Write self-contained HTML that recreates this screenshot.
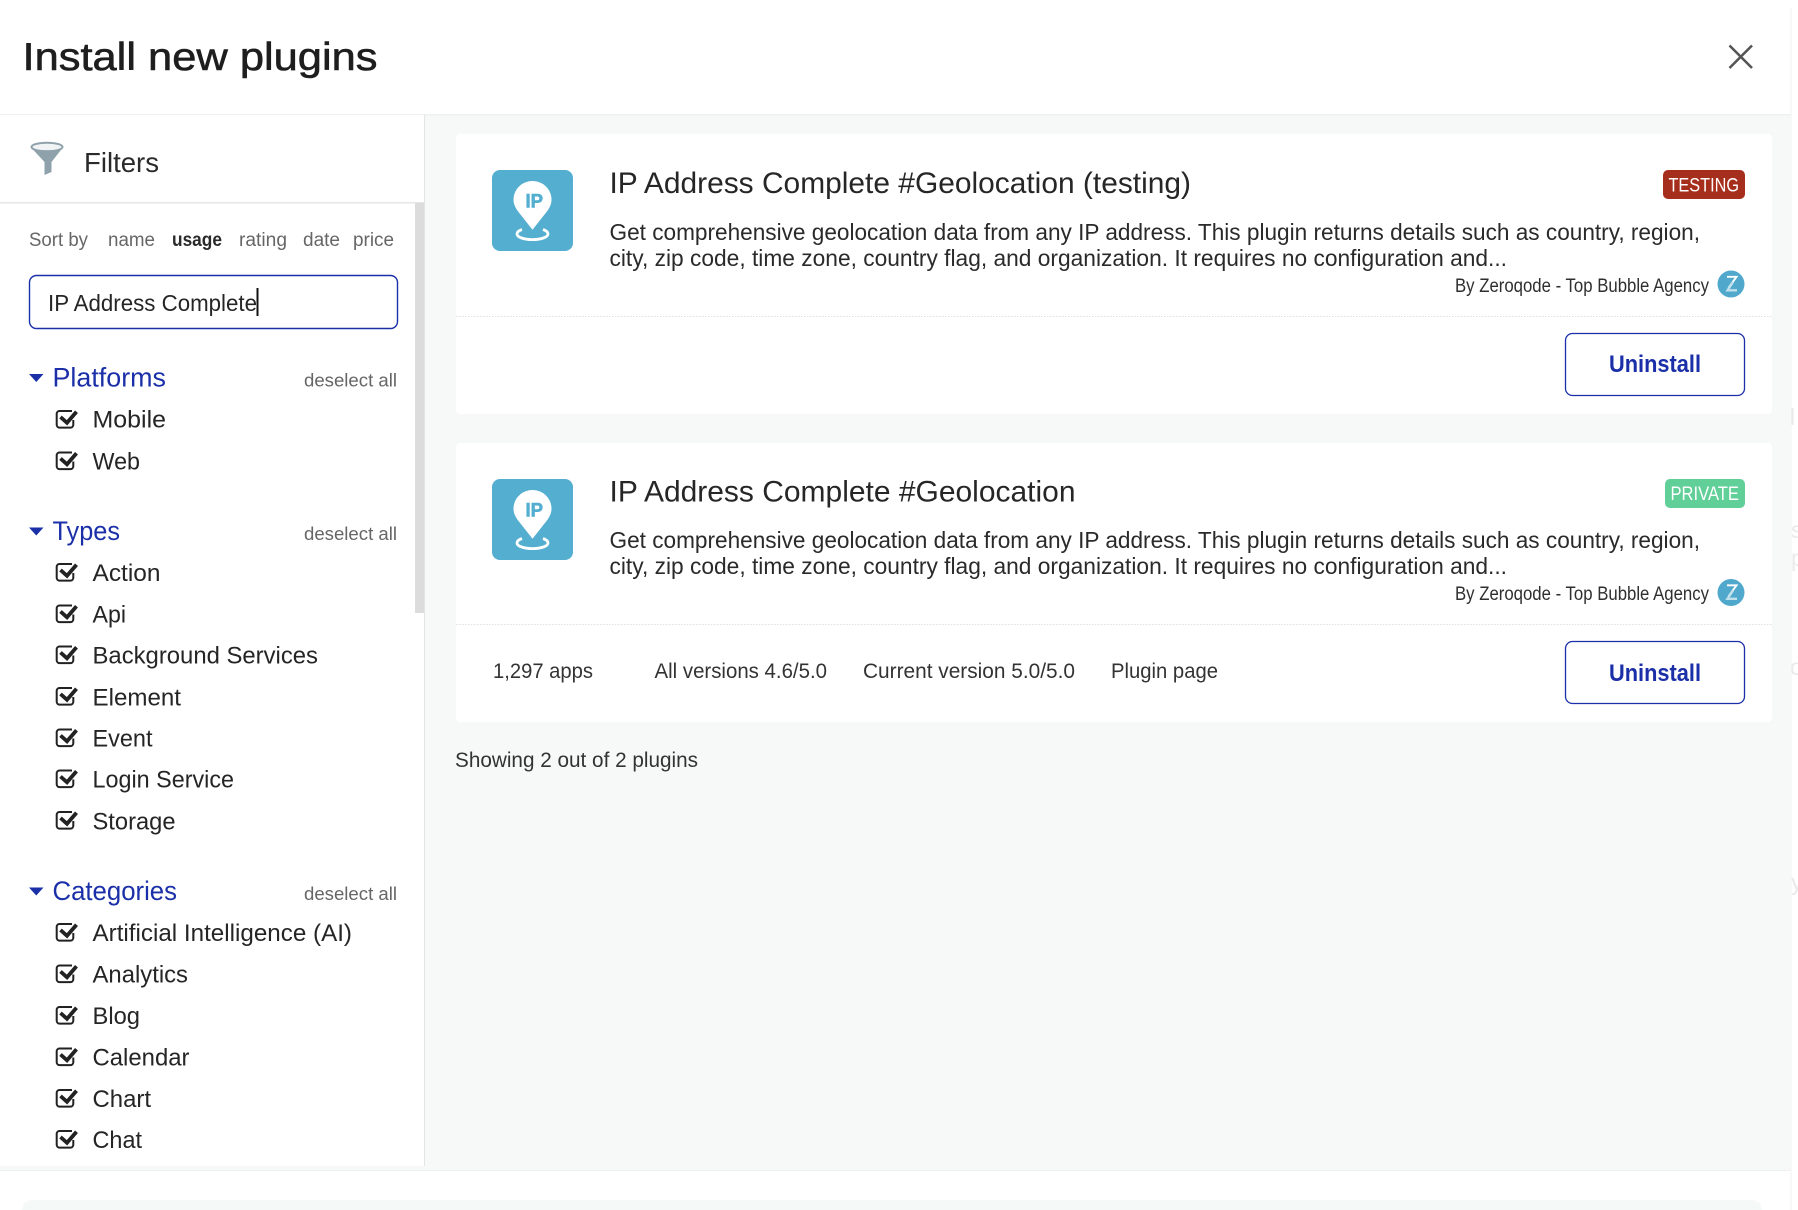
<!DOCTYPE html>
<html lang="en"><head><meta charset="utf-8"><title>Install new plugins</title>
<style>
html,body{margin:0;padding:0;background:#fff;width:1798px;height:1210px;overflow:hidden}
svg{display:block;font-family:"Liberation Sans",Arial,sans-serif}
.it{font-size:24.5px;fill:#252525}
.hd{font-size:27px;fill:#1a2fa8}
.ds{font-size:18.5px;fill:#666}
.so{font-size:19px;fill:#666}
.de{font-size:23px;fill:#2a2a2a}
.by{font-size:19px;fill:#2f2f2f}
.st{font-size:21px;fill:#333}
</style></head><body>
<svg xmlns="http://www.w3.org/2000/svg" width="1798" height="1210" viewBox="0 0 1798 1210">
<defs>
<g id="cb" fill="none" stroke="#222">
<path d="M72 411H59.500a2.800 2.800 0 0 0-2.800 2.800v11a2.800 2.800 0 0 0 2.800 2.800h11a2.800 2.800 0 0 0 2.800-2.800V420" stroke-width="2"/>
<path d="M60.500 417l6.500 5.800 9.500-11" stroke-width="3.800"/>
</g>
<g id="tri"><path d="M29 374h14.500l-7.250 8z" fill="#1a2fa8"/></g>
<g id="ico">
<rect x="492" y="170" width="81" height="81" rx="8" fill="#53aecf"/>
<path d="M532.500 181c-10.500 0-19 8.300-19 18.800 0 4 1.700 7.500 4 11l15 19 15-19c2.300-3.500 4-7 4-11 0-10.500-8.500-18.800-19-18.800z" fill="#fff"/>
<path d="M522 229.500c-3 1-5 2.600-5 4.500 0 3.200 7 5.600 15.500 5.600s15.500-2.400 15.500-5.600c0-1.900-2-3.500-5-4.500" fill="none" stroke="#fff" stroke-width="2.800"/>
<text x="525.500" y="207.500" font-size="19" font-weight="700" fill="#53aecf" stroke="#53aecf" stroke-width=".6" textLength="17.500" lengthAdjust="spacingAndGlyphs">IP</text>
</g>
<g id="av">
<circle cx="1731" cy="284" r="13.500" fill="#50a9cc"/>
<path d="M1727 276.800h9.500l-8 11" fill="none" stroke="#fff" stroke-width="1.900"/>
<path d="M1733 282l-5.500 8.300h9.500" fill="none" stroke="#bfe0ec" stroke-width="2.400"/>
</g>
</defs>

<rect width="1798" height="1210" fill="#fff"/>
<g font-size="23" fill="#eaeaea">
<text x="1790" y="425">l</text><text x="1791" y="538">s</text><text x="1791" y="566">p</text><text x="1790" y="675">ol</text><text x="1791" y="890">y</text>
</g>
<!-- modal -->
<rect x="0" y="0" width="1791" height="1210" fill="#fff"/>
<path d="M1791 8V1210" stroke="#f1f2f2" stroke-width="1" fill="none"/>
<rect x="0" y="115" width="1791" height="1056" fill="#f7f9f9"/>
<rect x="0" y="114" width="1791" height="1.500" fill="#eff0f0"/>
<rect x="0" y="1170" width="1791" height="1" fill="#eff1f1"/>
<text x="22.500" y="70" font-size="39" fill="#1e1e1e" stroke="#1e1e1e" stroke-width=".6" textLength="355" lengthAdjust="spacingAndGlyphs">Install new plugins</text>
<path d="M1729.500 45.500l22.500 22.500M1752 45.500l-22.500 22.500" stroke="#555" stroke-width="2.600" fill="none"/>

<!-- left panel -->
<rect x="0" y="115" width="424" height="1051" fill="#fff"/>
<rect x="424" y="115" width="1" height="1051" fill="#e3e5e5"/>
<rect x="0" y="202" width="424" height="1.500" fill="#e6e6e6"/>
<rect x="415" y="203" width="9" height="410" fill="#dcdcdc"/>
<ellipse cx="47" cy="147" rx="15.500" ry="4.300" fill="#f1f4f5" stroke="#8fa2ab" stroke-width="2"/>
<path d="M31.500 148c3 3 28 3 31 0l-11 14v10l-7 3v-13z" fill="#8fa2ab"/>
<text x="84" y="172" font-size="28" fill="#2a2a2a" textLength="75" lengthAdjust="spacingAndGlyphs">Filters</text>
<text class="so" x="29" y="246" textLength="59" lengthAdjust="spacingAndGlyphs">Sort by</text>
<text class="so" x="108" y="246" textLength="47" lengthAdjust="spacingAndGlyphs">name</text>
<text class="so" x="172" y="246" font-weight="700" style="fill:#2a2a2a" textLength="50" lengthAdjust="spacingAndGlyphs">usage</text>
<text class="so" x="239" y="246" textLength="48" lengthAdjust="spacingAndGlyphs">rating</text>
<text class="so" x="303" y="246" textLength="37" lengthAdjust="spacingAndGlyphs">date</text>
<text class="so" x="353" y="246" textLength="41" lengthAdjust="spacingAndGlyphs">price</text>
<rect x="29.500" y="275.500" width="368" height="53" rx="7" fill="#fff" stroke="#1a2fa8" stroke-width="1.400"/>
<text x="48" y="311" font-size="23" fill="#252525" textLength="209" lengthAdjust="spacingAndGlyphs">IP Address Complete</text>
<rect x="256.500" y="288" width="2" height="28" fill="#111"/>

<use href="#tri"/>
<text class="hd" x="52.500" y="386.500" textLength="113.500" lengthAdjust="spacingAndGlyphs">Platforms</text>
<text class="ds" x="304" y="386.500" textLength="93" lengthAdjust="spacingAndGlyphs">deselect all</text>
<use href="#cb"/><text class="it" x="92.500" y="427.500" textLength="73.500" lengthAdjust="spacingAndGlyphs">Mobile</text>
<use href="#cb" y="41.500"/><text class="it" x="92.500" y="469.500" textLength="47.500" lengthAdjust="spacingAndGlyphs">Web</text>

<use href="#tri" y="153.500"/>
<text class="hd" x="52.500" y="540" textLength="67.500" lengthAdjust="spacingAndGlyphs">Types</text>
<text class="ds" x="304" y="540" textLength="93" lengthAdjust="spacingAndGlyphs">deselect all</text>
<use href="#cb" y="153"/><text class="it" x="92.500" y="581" textLength="68" lengthAdjust="spacingAndGlyphs">Action</text>
<use href="#cb" y="194.500"/><text class="it" x="92.500" y="622.500" textLength="33.500" lengthAdjust="spacingAndGlyphs">Api</text>
<use href="#cb" y="235.500"/><text class="it" x="92.500" y="663.500" textLength="225.500" lengthAdjust="spacingAndGlyphs">Background Services</text>
<use href="#cb" y="277"/><text class="it" x="92.500" y="705.500" textLength="88.500" lengthAdjust="spacingAndGlyphs">Element</text>
<use href="#cb" y="318.500"/><text class="it" x="92.500" y="746.500" textLength="60" lengthAdjust="spacingAndGlyphs">Event</text>
<use href="#cb" y="359.500"/><text class="it" x="92.500" y="787.500" textLength="141.500" lengthAdjust="spacingAndGlyphs">Login Service</text>
<use href="#cb" y="401"/><text class="it" x="92.500" y="829.500" textLength="83" lengthAdjust="spacingAndGlyphs">Storage</text>

<use href="#tri" y="513.500"/>
<text class="hd" x="52.500" y="900" textLength="124.500" lengthAdjust="spacingAndGlyphs">Categories</text>
<text class="ds" x="304" y="900" textLength="93" lengthAdjust="spacingAndGlyphs">deselect all</text>
<use href="#cb" y="513"/><text class="it" x="92.500" y="941" textLength="259.500" lengthAdjust="spacingAndGlyphs">Artificial Intelligence (AI)</text>
<use href="#cb" y="554.500"/><text class="it" x="92.500" y="982.500" textLength="95.500" lengthAdjust="spacingAndGlyphs">Analytics</text>
<use href="#cb" y="596"/><text class="it" x="92.500" y="1024" textLength="47.500" lengthAdjust="spacingAndGlyphs">Blog</text>
<use href="#cb" y="637.500"/><text class="it" x="92.500" y="1065.500" textLength="97" lengthAdjust="spacingAndGlyphs">Calendar</text>
<use href="#cb" y="679"/><text class="it" x="92.500" y="1107" textLength="58.500" lengthAdjust="spacingAndGlyphs">Chart</text>
<use href="#cb" y="720"/><text class="it" x="92.500" y="1148" textLength="49.500" lengthAdjust="spacingAndGlyphs">Chat</text>

<!-- card 1 -->
<rect x="456" y="134" width="1316" height="280" rx="4" fill="#fff"/>
<use href="#ico"/>
<text x="609.500" y="193" font-size="30" fill="#262626" textLength="581.500" lengthAdjust="spacingAndGlyphs">IP Address Complete #Geolocation (testing)</text>
<text class="de" x="609.500" y="240" textLength="1090.500" lengthAdjust="spacingAndGlyphs">Get comprehensive geolocation data from any IP address. This plugin returns details such as country, region,</text>
<text class="de" x="609.500" y="266" textLength="897.500" lengthAdjust="spacingAndGlyphs">city, zip code, time zone, country flag, and organization. It requires no configuration and...</text>
<rect x="1663" y="170" width="82" height="29" rx="5" fill="#a62e1c"/>
<text x="1668.500" y="191.500" font-size="19" fill="#fff" textLength="70.500" lengthAdjust="spacingAndGlyphs">TESTING</text>
<text class="by" x="1455" y="292" textLength="254" lengthAdjust="spacingAndGlyphs">By Zeroqode - Top Bubble Agency</text>
<use href="#av"/>
<path d="M456 316.500H1772" stroke="#dfe1e1" stroke-width="1" stroke-dasharray="1.500 1.500"/>
<rect x="1565.500" y="333.500" width="179" height="62" rx="7" fill="#fff" stroke="#1a2fa8" stroke-width="1.300"/>
<text x="1609" y="372" font-size="24" font-weight="700" fill="#1a2fa8" textLength="92" lengthAdjust="spacingAndGlyphs">Uninstall</text>

<!-- card 2 -->
<rect x="456" y="443" width="1316" height="279" rx="4" fill="#fff"/>
<use href="#ico" y="309"/>
<text x="609.500" y="501.500" font-size="30" fill="#262626" textLength="466" lengthAdjust="spacingAndGlyphs">IP Address Complete #Geolocation</text>
<text class="de" x="609.500" y="548" textLength="1090.500" lengthAdjust="spacingAndGlyphs">Get comprehensive geolocation data from any IP address. This plugin returns details such as country, region,</text>
<text class="de" x="609.500" y="574" textLength="897.500" lengthAdjust="spacingAndGlyphs">city, zip code, time zone, country flag, and organization. It requires no configuration and...</text>
<rect x="1665" y="479" width="80" height="29" rx="5" fill="#60cf98"/>
<text x="1670.500" y="500" font-size="19" fill="#fff" textLength="68.500" lengthAdjust="spacingAndGlyphs">PRIVATE</text>
<text class="by" x="1455" y="600" textLength="254" lengthAdjust="spacingAndGlyphs">By Zeroqode - Top Bubble Agency</text>
<use href="#av" y="308.500"/>
<path d="M456 624.500H1772" stroke="#dfe1e1" stroke-width="1" stroke-dasharray="1.500 1.500"/>
<text class="st" x="493" y="678" textLength="100" lengthAdjust="spacingAndGlyphs">1,297 apps</text>
<text class="st" x="654.500" y="678" textLength="172.500" lengthAdjust="spacingAndGlyphs">All versions 4.6/5.0</text>
<text class="st" x="863" y="678" textLength="212" lengthAdjust="spacingAndGlyphs">Current version 5.0/5.0</text>
<text class="st" x="1111" y="678" textLength="107" lengthAdjust="spacingAndGlyphs">Plugin page</text>
<rect x="1565.500" y="641.500" width="179" height="62" rx="7" fill="#fff" stroke="#1a2fa8" stroke-width="1.300"/>
<text x="1609" y="681" font-size="24" font-weight="700" fill="#1a2fa8" textLength="92" lengthAdjust="spacingAndGlyphs">Uninstall</text>

<text class="st" x="455" y="767" textLength="243" lengthAdjust="spacingAndGlyphs">Showing 2 out of 2 plugins</text>

<!-- footer -->
<rect x="22" y="1200" width="1740" height="30" rx="10" fill="#f5f9f7"/>
</svg>
</body></html>
